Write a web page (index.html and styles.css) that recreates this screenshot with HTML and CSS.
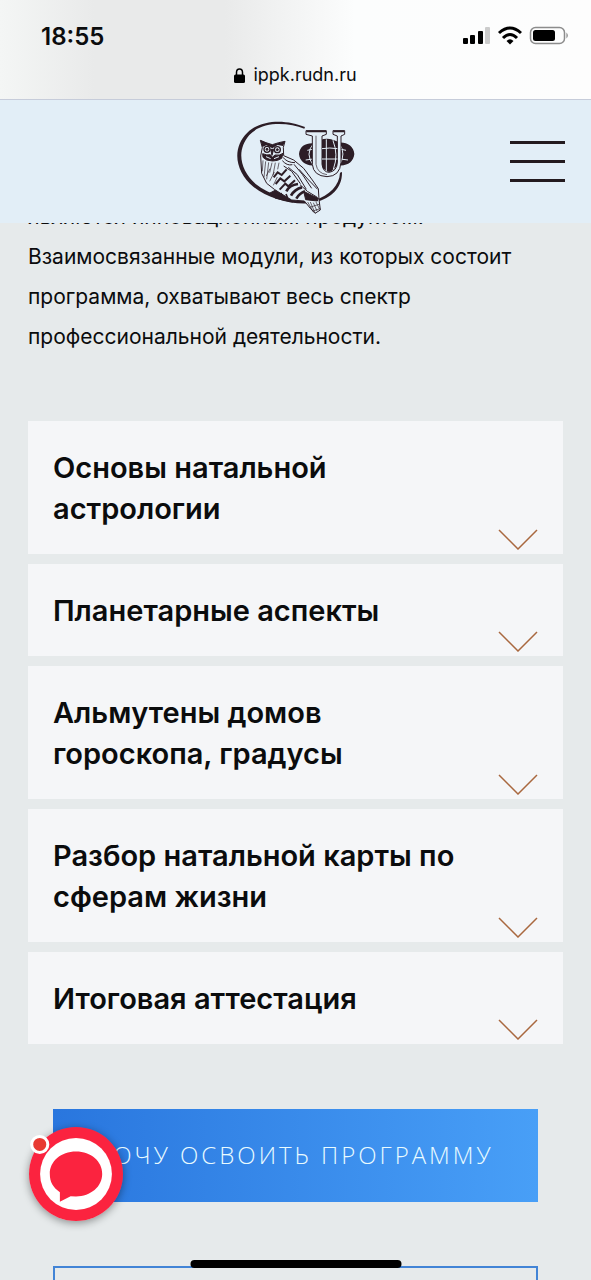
FILE: index.html
```html
<!DOCTYPE html>
<html lang="ru">
<head>
    <meta charset="UTF-8">
    <meta name="viewport" content="width=device-width, initial-scale=1.0">
    <title>ippk.rudn.ru</title>
    <link rel="stylesheet" href="styles.css">
</head>
<body>
    <div class="browser-bar">
        <div class="status">
            <span class="time">18:55</span>
            <svg class="status-icons" viewBox="0 0 106 20" aria-hidden="true">
                <rect x="0" y="12" width="5" height="6" rx="1"/>
                <rect x="7" y="9" width="5" height="9" rx="1"/>
                <rect x="15" y="5" width="5" height="13" rx="1"/>
                <rect x="22" y="1" width="5" height="17" rx="1" fill="#ccc"/>
                <g fill="none" stroke="#000" stroke-width="3">
                    <path d="M36 7Q47 -3 58 7"/>
                    <path d="M40 12Q47 5 54 12"/>
                </g>
                <path d="M43.500 15Q47 11.500 50.500 15L47 18.500Z"/>
                <rect x="67.500" y="1.500" width="34" height="16" rx="5" fill="none" stroke="#8c8c8c" stroke-width="1.500"/>
                <rect x="70" y="4" width="22" height="11" rx="2.500"/>
                <path d="M103.500 6.500Q106 9.500 103.500 12.500Z" fill="#777"/>
            </svg>
        </div>
        <div class="address">
            <svg class="lock" viewBox="0 0 11 15" aria-hidden="true">
                <path d="M2.500 7V4.500a3 3.500 0 0 1 6 0V7" fill="none" stroke="#000" stroke-width="1.500"/>
                <rect x="0" y="6.500" width="11" height="8.500" rx="1.500"/>
            </svg>
            <span>ippk.rudn.ru</span>
        </div>
    </div>

    <header>
        <a href="#" class="logo" aria-label="РУДН">
            <svg viewBox="-6 -30 435 369" fill="none" stroke="#2c1d26" stroke-width="3">
                <!-- ring -->
                <path fill="#2c1d26" stroke="none" d="M240 51C190 30 112 24 67 68C18 116 32 186 85 230C130 267 218 290 270 277C322 264 352 232 351 186L345 188C343 226 314 257 268 270C222 282 140 260 92 222C45 180 33 122 73 75C113 32 190 38 238 56Z"/>
                <!-- branch -->
                <path fill="#2c1d26" d="M133 250L152 240L170 252L196 247L214 262L204 276L174 270L150 264Z"/>
                <!-- owl body -->
                <path fill="#e2eef7" d="M106 91L112 113L107 138L110 190L125 220L148 238L170 252L200 270L238 273L257 296L270 310L286 300L282 268L280 236L262 210L236 175L206 150L176 137L175 112L180 94L161 98L142 104L123 98Z"/>
                <path fill="#2c1d26" stroke="none" d="M106 90L124 98L142 104L162 98L181 94L174 108L158 105L142 115L124 106L112 111Z"/>
                <circle cx="126" cy="118" r="9" fill="#e2eef7" stroke-width="4"/>
                <circle cx="157" cy="119" r="9" fill="#e2eef7" stroke-width="4"/>
                <circle cx="126" cy="118" r="3" fill="#2c1d26"/>
                <circle cx="157" cy="119" r="3" fill="#2c1d26"/>
                <path fill="#2c1d26" d="M137 118L146 118L141 136ZM113 131Q126 137 136 134L142 142L150 135Q164 138 174 130L170 145L158 151L143 153L125 150L114 142Z"/>
                <path stroke="#e2eef7" d="M123 140L137 146M147 146L162 140"/>
                <path stroke-width="2" d="M114 151L112 184M122 154L117 202M131 157L125 208M141 158L134 188M151 158L144 196M162 158L158 178M124 198L135 176M134 214L148 186M145 226L157 201"/>
                <path stroke-width="6" d="M146 202L158 187L170 195L185 178M152 222L166 205L178 214L196 197M164 239L181 221L190 229L210 211"/>
                <path stroke-width="8" d="M184 244Q194 225 219 222M198 257Q209 237 231 232M214 266Q224 249 240 244"/>
                <path d="M174 142Q186 158 210 158M172 152Q186 168 202 164M176 168L200 184L226 221M190 172L217 194L244 238M207 163L232 193L260 235M222 178L248 207L278 238M225 224L247 244L277 262"/>
                <path fill="#2c1d26" d="M236 244L260 256L280 265L277 273L242 269Z"/>
                <path stroke-width="2" d="M248 276L264 304M256 276L270 309M265 278L276 303M273 276L284 298M254 292L282 283M263 303L286 296"/>
                <path stroke-width="5" d="M154 246L160 259M168 249L174 264M183 252L188 264"/>
                <!-- globe -->
                <path fill="#2c1d26" stroke="none" d="M222 132C224 108 244 98 266 100Q304 74 342 98C366 96 387 110 388 132C386 155 367 168 344 166Q305 190 267 166C242 168 224 154 222 132Z"/>
                <g stroke="#e2eef7" stroke-width="3">
                    <path d="M265 101Q239 132 265 166M342 98Q365 132 343 166M304 88V178M247 121Q305 105 363 121M242 150Q304 139 369 150M323 88Q349 132 325 176"/>
                </g>
                <!-- letter frame -->
                <path fill="#e2eef7" stroke-width="3" d="M243 62H304V73L291 78V163Q294 187 313 187Q336 183 337 157V78L324 73V62H359V73L348 78V157Q345 199 306 200Q265 198 262 163V78L243 73Z"/>
                <path stroke-width="5" d="M244 64H303M325 64H358"/>
                <path stroke-width="2" d="M273 77V163Q277 190 306 194"/>
                <path fill="#2c1d26" stroke="none" d="M291 93Q314 86 337 95V157Q331 181 313 186Q292 183 291 157Z"/>
                <path stroke="#e2eef7" d="M304 90V183M291 116Q315 112 337 116M291 147H337M324 92Q341 134 325 178"/>
            </svg>
        </a>
        <button type="button" class="menu-btn" aria-label="Меню">
            <span></span>
            <span></span>
            <span></span>
        </button>
    </header>

    <main>
        <p class="intro">являются инновационным продуктом. Взаимосвязанные модули, из которых состоит программа, охватывают весь спектр профессиональной деятельности.</p>

        <section class="modules">
            <button type="button" class="module">
                <span class="module-title">Основы натальной астрологии</span>
                <svg class="arrow" viewBox="0 0 40 21"><path d="M1 1L20 20L39 1"/></svg>
            </button>
            <button type="button" class="module">
                <span class="module-title">Планетарные аспекты</span>
                <svg class="arrow" viewBox="0 0 40 21"><path d="M1 1L20 20L39 1"/></svg>
            </button>
            <button type="button" class="module">
                <span class="module-title">Альмутены домов гороскопа, градусы</span>
                <svg class="arrow" viewBox="0 0 40 21"><path d="M1 1L20 20L39 1"/></svg>
            </button>
            <button type="button" class="module">
                <span class="module-title">Разбор натальной карты по сферам жизни</span>
                <svg class="arrow" viewBox="0 0 40 21"><path d="M1 1L20 20L39 1"/></svg>
            </button>
            <button type="button" class="module">
                <span class="module-title">Итоговая аттестация</span>
                <svg class="arrow" viewBox="0 0 40 21"><path d="M1 1L20 20L39 1"/></svg>
            </button>
        </section>

        <section class="actions">
            <a href="#" class="btn">ХОЧУ ОСВОИТЬ ПРОГРАММУ</a>
            <a href="#" class="btn btn-outline" aria-label="Подробнее"></a>
        </section>
    </main>

    <button type="button" class="chat" aria-label="Чат">
        <svg viewBox="88 112 280 280">
            <circle cx="228" cy="252" r="140" fill="#fb233f"/>
            <circle cx="228" cy="252" r="107" fill="#fff"/>
            <path fill="#fb233f" d="M180 335V306C159 292 150 275 150 252C150 214 183 185 228 185C273 185 306 214 306 252C306 290 272 318 228 319L212 318Z"/>
            <circle cx="120" cy="164" r="24" fill="#e83a32" stroke="#fff" stroke-width="9"/>
        </svg>
    </button>
    <div class="home-bar"></div>
</body>
</html>
```
FILE: styles.css
```css
* {
    margin: 0;
    padding: 0;
    box-sizing: border-box;
}

body {
    height: 100vh;
    overflow: hidden;
    background: #e6eaeb;
    color: #0b0c0d;
    font-family: Inter, 'Open Sans', sans-serif;
}

button {
    border: none;
    background: none;
    font: inherit;
    color: inherit;
    cursor: pointer;
}

svg {
    display: block;
}

/* phone status bar and address */
.browser-bar {
    height: 100px;
    padding-top: 22px;
    background: linear-gradient(90deg, #f4f6f5 0%, #e9eaea 16%, #e9eaea 38%, #fcfdfd 60%, #fdfdfd 100%);
    border-bottom: 1px solid #c6ccda;
}

.status {
    display: flex;
    justify-content: space-between;
    align-items: center;
    height: 28px;
    padding: 0 22px 0 41px;
}

.time {
    font-size: 24px;
    font-weight: 600;
}

.status-icons {
    width: 106px;
    height: 20px;
}

.address {
    display: flex;
    justify-content: center;
    align-items: center;
    gap: 8px;
    margin-top: 13px;
    font-size: 18px;
    line-height: 24px;
}

.lock {
    width: 11px;
    height: 15px;
}

header {
    position: relative;
    z-index: 10;
    display: grid;
    grid-template-columns: 1fr auto 1fr;
    align-items: center;
    padding: 0 26px;
    background: #e2eef7;
}

.logo {
    grid-column: 2;
}

.logo svg {
    width: 145px;
    height: 123px;
}

.menu-btn {
    justify-self: end;
    display: flex;
    flex-direction: column;
    gap: 16px;
    width: 55px;
}

.menu-btn span {
    height: 3px;
    background: #231a1f;
}

main {
    padding: 0 28px;
}

/* the page is scrolled: the first line runs under the header */
.intro {
    margin-top: -26px;
    margin-bottom: 64px;
    font-size: 21px;
    line-height: 40px;
}

.modules {
    display: flex;
    flex-direction: column;
    gap: 10px;
}

.module {
    display: flex;
    justify-content: space-between;
    align-items: flex-end;
    gap: 24px;
    padding: 26px 25px 4px;
    background: #f5f6f8;
    text-align: left;
}

.module-title {
    padding-bottom: 21px;
    font-size: 29px;
    font-weight: 600;
    line-height: 41px;
}

.arrow {
    flex: none;
    width: 40px;
    height: 21px;
    fill: none;
    stroke: #a9683f;
    stroke-width: 1.5;
}

.actions {
    display: flex;
    flex-direction: column;
    gap: 64px;
    margin-top: 65px;
    padding: 0 25px;
}

.btn {
    height: 93px;
    background: linear-gradient(90deg, #2976de, #489ff7);
    color: #e9fbff;
    font-family: 'Open Sans', sans-serif;
    font-size: 24px;
    font-weight: 300;
    line-height: 92px;
    letter-spacing: 3px;
    text-align: center;
    text-decoration: none;
    white-space: nowrap;
}

.btn-outline {
    background: none;
    border: 2px solid #4284d6;
}

.chat {
    position: fixed;
    left: 29px;
    bottom: 59px;
    width: 94px;
    height: 94px;
    border-radius: 50%;
    box-shadow: 0 2px 8px rgba(0, 0, 0, 0.4);
}

.chat svg {
    width: 94px;
    height: 94px;
    overflow: visible;
}

.home-bar {
    position: fixed;
    left: 50%;
    bottom: 12px;
    width: 211px;
    height: 8px;
    border-radius: 4px;
    background: #000;
    transform: translateX(-50%);
}
```
